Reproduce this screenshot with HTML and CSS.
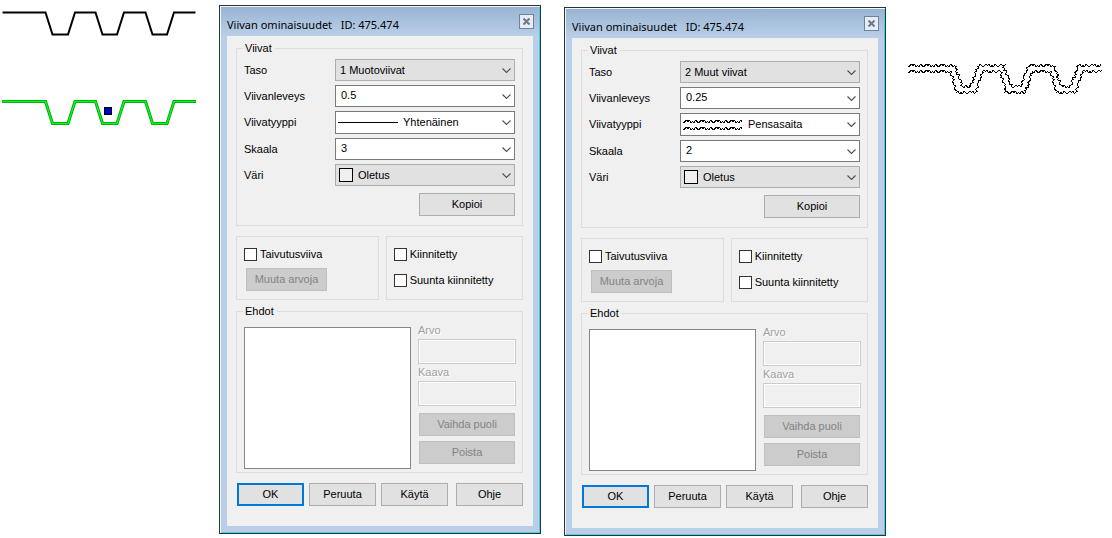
FILE: index.html
```html
<!DOCTYPE html>
<html lang="fi">
<head>
<meta charset="utf-8">
<title>Viivan ominaisuudet</title>
<link rel="stylesheet" href="styles.css">
</head>
<body>
<svg width="0" height="0" class="defs" aria-hidden="true">
  <symbol id="chevron" viewBox="0 0 9 5"><path d="M.5 .5 4.5 4.5 8.5 .5" fill="none" stroke="#505050" stroke-width="1.1"/></symbol>
  <symbol id="cross" viewBox="0 0 7 7"><path d="M.5 .5 6.5 6.5M6.5 .5 .5 6.5" fill="none" stroke="#6c7888" stroke-width="2"/></symbol>
</svg>
<main class="desktop">
  <svg class="drawing" width="219" height="135" viewBox="0 0 219 135" aria-label="Viivat">
    <path class="line-plain" d="M2.500 12.500H45.500L52.500 34.500H68L75 12.500H95.500L102.500 34.500H117L124 12.500H145.500L152.500 34.500H167L174 12.500H195.500"/>
    <g transform="translate(0 89)">
      <path class="line-edge" d="M2 12.500H45.500L52.500 34.500H68L75 12.500H95.500L102.500 34.500H117L124 12.500H145.500L152.500 34.500H167L174 12.500H196"/>
      <path class="line-selected" d="M2 12.500H45.500L52.500 34.500H68L75 12.500H95.500L102.500 34.500H117L124 12.500H145.500L152.500 34.500H167L174 12.500H196"/>
    </g>
    <rect class="handle" x="104.500" y="107.500" width="7" height="7"/>
  </svg>

  <section class="dialog">
    <header class="title"><h1>Viivan ominaisuudet &nbsp; ID: 475.474</h1><button class="close" aria-label="Sulje"><svg width="7" height="7"><use href="#cross"/></svg></button></header>
    <form class="panel">
      <fieldset class="group">
        <legend>Viivat</legend>
        <div class="fields">
          <label for="a-taso">Taso</label>
          <div class="combo"><select id="a-taso" class="gray"><option>1 Muotoviivat</option></select><svg class="arrow"><use href="#chevron"/></svg></div>
          <label for="a-lev">Viivanleveys</label>
          <div class="combo"><select id="a-lev" class="value"><option>0.5</option></select><svg class="arrow"><use href="#chevron"/></svg></div>
          <label for="a-tyyppi">Viivatyyppi</label>
          <div class="combo"><select id="a-tyyppi" class="linetype"><option>Yhtenäinen</option></select><svg class="sample" viewBox="0 0 60 13"><path d="M0 6.500H60" stroke="#000"/></svg><svg class="arrow"><use href="#chevron"/></svg></div>
          <label for="a-skaala">Skaala</label>
          <div class="combo"><select id="a-skaala" class="value"><option>3</option></select><svg class="arrow"><use href="#chevron"/></svg></div>
          <label for="a-vari">Väri</label>
          <div class="combo"><select id="a-vari" class="gray color"><option>Oletus</option></select><span class="swatch"></span><svg class="arrow"><use href="#chevron"/></svg></div>
        </div>
        <button type="button" class="btn copy">Kopioi</button>
      </fieldset>
      <div class="options">
        <div class="box bend">
          <label class="check"><input type="checkbox">Taivutusviiva</label>
          <button type="button" class="btn" disabled>Muuta arvoja</button>
        </div>
        <div class="box lock">
          <label class="check"><input type="checkbox">Kiinnitetty</label>
          <label class="check"><input type="checkbox">Suunta kiinnitetty</label>
        </div>
      </div>
      <fieldset class="group terms">
        <legend>Ehdot</legend>
        <div class="terms-body">
          <select class="list" size="2" aria-label="Ehdot"></select>
          <div class="side">
            <label for="a-arvo">Arvo</label><input id="a-arvo" type="text" disabled>
            <label for="a-kaava">Kaava</label><input id="a-kaava" type="text" disabled>
            <div class="side-buttons"><button type="button" class="btn" disabled>Vaihda puoli</button><button type="button" class="btn" disabled>Poista</button></div>
          </div>
        </div>
      </fieldset>
      <div class="actions"><button type="button" class="btn default">OK</button><button type="button" class="btn">Peruuta</button><button type="button" class="btn">Käytä</button><button type="button" class="btn help">Ohje</button></div>
    </form>
  </section>

  <section class="dialog second">
    <header class="title"><h1>Viivan ominaisuudet &nbsp; ID: 475.474</h1><button class="close" aria-label="Sulje"><svg width="7" height="7"><use href="#cross"/></svg></button></header>
    <form class="panel">
      <fieldset class="group">
        <legend>Viivat</legend>
        <div class="fields">
          <label for="b-taso">Taso</label>
          <div class="combo"><select id="b-taso" class="gray"><option>2 Muut viivat</option></select><svg class="arrow"><use href="#chevron"/></svg></div>
          <label for="b-lev">Viivanleveys</label>
          <div class="combo"><select id="b-lev" class="value"><option>0.25</option></select><svg class="arrow"><use href="#chevron"/></svg></div>
          <label for="b-tyyppi">Viivatyyppi</label>
          <div class="combo"><select id="b-tyyppi" class="linetype"><option>Pensasaita</option></select><svg class="sample" viewBox="0 0 60 13"><path class="hedge" data-points="0,3 60,3"/><path class="hedge" data-points="0,10 60,10"/></svg><svg class="arrow"><use href="#chevron"/></svg></div>
          <label for="b-skaala">Skaala</label>
          <div class="combo"><select id="b-skaala" class="value"><option>2</option></select><svg class="arrow"><use href="#chevron"/></svg></div>
          <label for="b-vari">Väri</label>
          <div class="combo"><select id="b-vari" class="gray color"><option>Oletus</option></select><span class="swatch"></span><svg class="arrow"><use href="#chevron"/></svg></div>
        </div>
        <button type="button" class="btn copy">Kopioi</button>
      </fieldset>
      <div class="options">
        <div class="box bend">
          <label class="check"><input type="checkbox">Taivutusviiva</label>
          <button type="button" class="btn" disabled>Muuta arvoja</button>
        </div>
        <div class="box lock">
          <label class="check"><input type="checkbox">Kiinnitetty</label>
          <label class="check"><input type="checkbox">Suunta kiinnitetty</label>
        </div>
      </div>
      <fieldset class="group terms">
        <legend>Ehdot</legend>
        <div class="terms-body">
          <select class="list" size="2" aria-label="Ehdot"></select>
          <div class="side">
            <label for="b-arvo">Arvo</label><input id="b-arvo" type="text" disabled>
            <label for="b-kaava">Kaava</label><input id="b-kaava" type="text" disabled>
            <div class="side-buttons"><button type="button" class="btn" disabled>Vaihda puoli</button><button type="button" class="btn" disabled>Poista</button></div>
          </div>
        </div>
      </fieldset>
      <div class="actions"><button type="button" class="btn default">OK</button><button type="button" class="btn">Peruuta</button><button type="button" class="btn">Käytä</button><button type="button" class="btn help">Ohje</button></div>
    </form>
  </section>

  <svg class="drawing" width="220" height="120" viewBox="0 0 220 120" aria-label="Pensasaita">
    <path class="hedge" data-points="22,65 68,65 76,86 84,86 92,65 117,65 125,86 134,86 142,65 167,65 175,86 184,86 192,65 216,65"/>
    <path class="hedge" data-points="22,71 64,71 70,92 89,92 96,71 114,71 120,92 139,92 146,71 164,71 170,92 189,92 196,71 216,71"/>
  </svg>
</main>
<script src="hedge.js"></script>
</body>
</html>
```

FILE: styles.css
```css
* { box-sizing: border-box; }
body { margin: 0; background: #fff; color: #000; font: 11px/13px "Liberation Sans", Arial, sans-serif; }
.defs { position: absolute; }
.desktop { display: flex; align-items: flex-start; }
.drawing { flex: none; display: block; }
.line-plain { fill: none; stroke: #000; stroke-width: 2; }
.line-edge { fill: none; stroke: #009a10; stroke-width: 3; }
.line-selected { fill: none; stroke: #00ff10; stroke-width: 1.400; }
.handle { fill: #0000c8; stroke: #000; }
.hedge { fill: none; stroke: #000; stroke-width: 1; shape-rendering: crispEdges; }

.dialog {
  flex: none; width: 322px; margin-top: 5px; padding: 1px 7px 7px;
  border: 1px solid #2b3238; background: #b9cfe8;
  box-shadow: inset 1px 1px #f4f8fc, inset -1px -1px #45cfe8;
}
.second { margin: 7px 0 0 23px; }
.title {
  display: flex; justify-content: space-between; align-items: flex-start;
  height: 29px; margin: 0 -6px; padding: 7px 5px 0 6px;
  background: linear-gradient(#99b4d2, #b9cfe8);
}
.title h1 { margin: 0; padding-top: 3px; font: 11px/16px "Noto Sans", "Open Sans", sans-serif; white-space: nowrap; }
.close { display: flex; align-items: center; justify-content: center; width: 15px; height: 15px; padding: 0; border: 1px solid #6f8299; background: #e4ecf6; }
.panel { padding: 6px 10px 20px 9px; background: #f0f0f0; }

.group { min-width: 0; margin: 0; padding: 4px 7px 9px; border: 1px solid #dcdcdc; }
legend { margin-left: -1px; padding: 0 3px 0 2px; }
.fields { display: grid; grid-template-columns: 91px 1fr; gap: 4px 0; align-items: center; }
.combo { position: relative; }
select, input, button { font: inherit; color: inherit; }
.combo select {
  display: block; appearance: none; width: 100%; height: 22px; margin: 0; padding: 0 24px 0 4px;
  border: 1px solid #7a7a7a; border-radius: 0; background: #fff;
}
.combo .gray { border-color: #adadad; background: #e1e1e1; }
.combo .value { padding-left: 5px; padding-bottom: 2px; }
.combo .linetype { height: 23px; padding-left: 67px; }
.combo .color { padding-left: 22px; }
.arrow { position: absolute; right: 4px; top: 9px; width: 9px; height: 5px; pointer-events: none; }
.sample { position: absolute; left: 3px; top: 5px; width: 60px; height: 13px; pointer-events: none; }
.swatch { position: absolute; left: 4px; top: 4px; width: 14px; height: 14px; border: 1px solid #000; background: #f0f0f0; pointer-events: none; }

.btn { height: 23px; padding: 0; border: 1px solid #adadad; border-radius: 0; background: #e1e1e1; text-align: center; }
.btn:disabled { border-color: #bfbfbf; background: #ccc; color: #838383; }
.copy { display: block; width: 96px; margin: 7px 0 0 auto; }

.options { display: flex; gap: 7px; margin: 10px 0 5px; }
.box { height: 64px; border: 1px solid #dcdcdc; padding: 11px 7px 0; }
.bend { flex: 143; }
.lock { flex: 137; display: flex; flex-direction: column; gap: 13px; }
.bend .btn { display: block; width: 81px; margin: 7px 0 0 2px; }
.check { display: flex; align-items: center; gap: 3px; white-space: nowrap; }
.check input { appearance: none; width: 13px; height: 13px; margin: 0; border: 1px solid #333; background: #fff; }

.terms { padding: 6px 6px 3px 7px; }
.terms-body { display: flex; gap: 7px; }
.list { flex: 1; min-width: 0; height: 142px; margin: 3px 0 0; border: 1px solid #828790; border-radius: 0; background: #fff; outline: none; }
.side { width: 98px; display: flex; flex-direction: column; gap: 2px; color: #a0a0a0; }
.side label { text-shadow: 1px 1px #fff; }
.side input { width: 100%; height: 25px; border: 1px solid #ccc; background: #f0f0f0; box-shadow: inset 0 0 0 1px #fff; }
.side-buttons { display: grid; gap: 5px; padding: 5px 1px 0; }

.actions { display: flex; gap: 5px; margin: 10px 0 0 1px; }
.actions .btn { width: 67px; }
.actions .default { border: 2px solid #0078d7; }
.actions .help { margin-left: auto; }
```

FILE: hedge.js
```js
// Draws a jagged hedge line along each path's list of points.
const offsets = [1, 0, -1, 0, -1, 1, 0, 1, -1, 0];
document.querySelectorAll(".hedge").forEach((path) => {
  const points = path.dataset.points.split(" ").map((p) => p.split(",").map(Number));
  let d = "";
  let n = 0;
  for (let i = 1; i < points.length; i++) {
    const [x0, y0] = points[i - 1];
    const [x1, y1] = points[i];
    const length = Math.hypot(x1 - x0, y1 - y0);
    const ux = (x1 - x0) / length;
    const uy = (y1 - y0) / length;
    for (let t = 0; t < length; t += 1.5) {
      const o = offsets[n++ % offsets.length] * 1.2;
      d += (d ? "L" : "M") + (x0 + ux * t - uy * o + 0.5) + " " + (y0 + uy * t + ux * o + 0.5);
    }
  }
  path.setAttribute("d", d);
});
```
